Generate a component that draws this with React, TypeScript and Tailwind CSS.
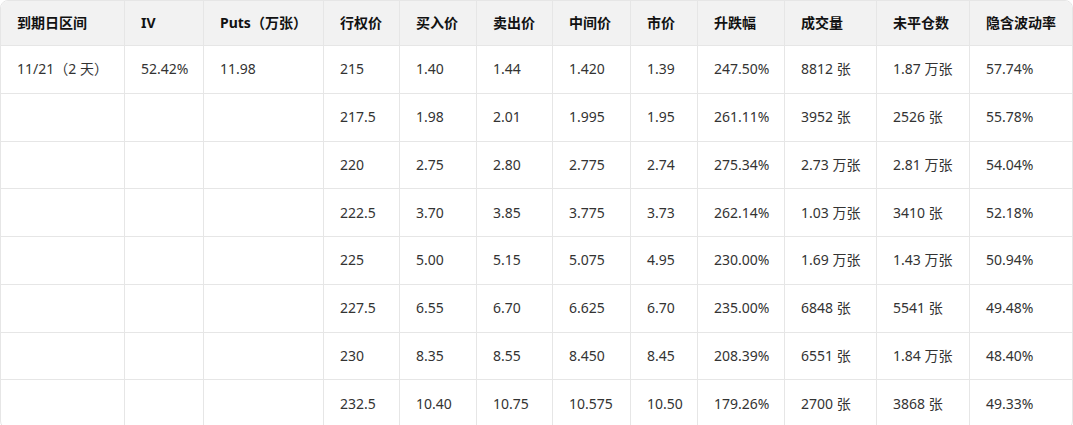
import React from "react";

const headers = [
  "到期日区间",
  "IV",
  "Puts（万张）",
  "行权价",
  "买入价",
  "卖出价",
  "中间价",
  "市价",
  "升跌幅",
  "成交量",
  "未平仓数",
  "隐含波动率",
];

// column widths incl. right border
const widths = [124, 79, 120, 76, 77, 76, 78, 67, 87, 92, 93, 102];

const rows: string[][] = [
  ["215", "1.40", "1.44", "1.420", "1.39", "247.50%", "8812 张", "1.87 万张", "57.74%"],
  ["217.5", "1.98", "2.01", "1.995", "1.95", "261.11%", "3952 张", "2526 张", "55.78%"],
  ["220", "2.75", "2.80", "2.775", "2.74", "275.34%", "2.73 万张", "2.81 万张", "54.04%"],
  ["222.5", "3.70", "3.85", "3.775", "3.73", "262.14%", "1.03 万张", "3410 张", "52.18%"],
  ["225", "5.00", "5.15", "5.075", "4.95", "230.00%", "1.69 万张", "1.43 万张", "50.94%"],
  ["227.5", "6.55", "6.70", "6.625", "6.70", "235.00%", "6848 张", "5541 张", "49.48%"],
  ["230", "8.35", "8.55", "8.450", "8.45", "208.39%", "6551 张", "1.84 万张", "48.40%"],
  ["232.5", "10.40", "10.75", "10.575", "10.50", "179.26%", "2700 张", "3868 张", "49.33%"],
];

export default function App() {
  return (
    <div
      className="bg-white text-sm"
      style={{ fontFamily: '"Noto Sans", "Noto Sans CJK SC", sans-serif' }}
    >
      <div className="rounded-lg border border-[#e6e6e6] overflow-hidden">
        <table className="w-full table-fixed border-separate border-spacing-0">
          <colgroup>
            {widths.map((w, i) => (
              <col key={i} style={{ width: w }} />
            ))}
          </colgroup>
          <thead>
            <tr>
              {headers.map((h, i) => (
                <th
                  key={h}
                  className={`h-[45px] bg-[#f2f2f2] px-4 text-left align-middle font-bold text-[#111] border-b border-[#e6e6e6] whitespace-nowrap ${
                    i < headers.length - 1 ? "border-r" : ""
                  }`}
                >
                  {h}
                </th>
              ))}
            </tr>
          </thead>
          <tbody>
            {rows.map((r, ri) => {
              const first =
                ri === 0 ? ["11/21（2 天）", "52.42%", "11.98"] : ["", "", ""];
              const cells = [...first, ...r];
              return (
                <tr key={ri}>
                  {cells.map((c, ci) => (
                    <td
                      key={ci}
                      className={`h-[47.75px] px-4 align-middle text-[#333] whitespace-nowrap border-[#e6e6e6] ${
                        ri < rows.length - 1 ? "border-b" : ""
                      } ${ci < cells.length - 1 ? "border-r" : ""}`}
                    >
                      {c}
                    </td>
                  ))}
                </tr>
              );
            })}
          </tbody>
        </table>
      </div>
    </div>
  );
}
